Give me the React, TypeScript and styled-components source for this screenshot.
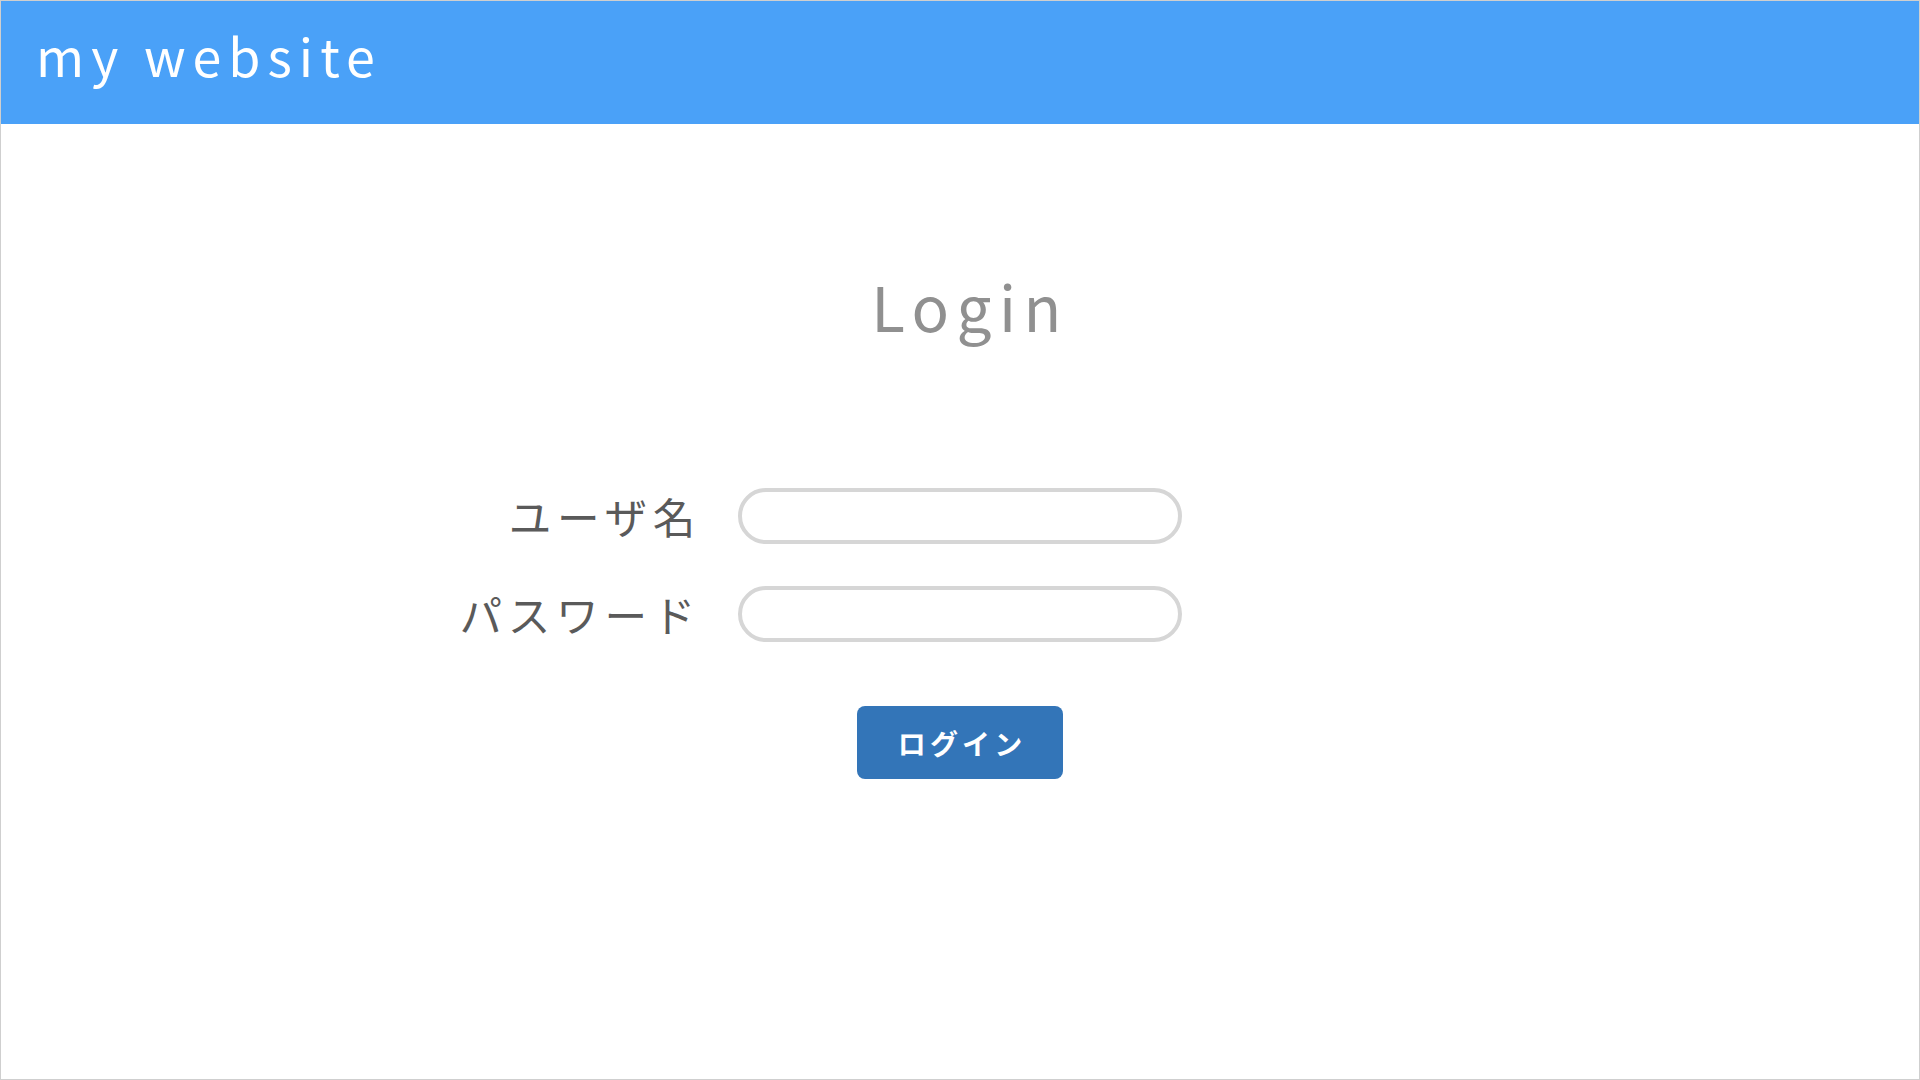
import React from 'react';
import styled, { createGlobalStyle } from 'styled-components';

const GlobalStyle = createGlobalStyle`
	html, body {
		margin: 0;
		padding: 0;
		background: #ffffff;
	}
	* {
		box-sizing: border-box;
	}
	body {
		font-family: "Noto Sans CJK JP", "Noto Sans", sans-serif;
	}
`;

const Page = styled.div`
	width: 1920px;
	height: 1080px;
	border: 1px solid #cfcfcf;
	display: flex;
	flex-direction: column;
	background: #ffffff;
`;

const Header = styled.header`
	height: 123px;
	background: #4aa1f8;
	display: flex;
	align-items: center;
	padding: 0 0 15px 35px;
`;

const SiteName = styled.h1`
	margin: 0;
	color: #ffffff;
	font-size: 52px;
	font-weight: 400;
	letter-spacing: 0.135em;
	line-height: 1;
`;

const Main = styled.main`
	display: flex;
	flex-direction: column;
	align-items: center;
	padding-top: 150px;
`;

const Title = styled.h2`
	margin: 0 0 152px;
	padding-left: 20px;
	color: #909090;
	font-size: 62px;
	font-weight: 400;
	letter-spacing: 0.12em;
	line-height: 1;
`;

const Form = styled.form`
	width: 100%;
	display: grid;
	grid-template-columns: 1fr 444px 1fr;
	row-gap: 42px;
	align-items: center;
`;

const Label = styled.label`
	grid-column: 1;
	justify-self: end;
	margin-right: 37px;
	color: #5a5a5a;
	font-size: 42.6px;
	font-weight: 400;
	letter-spacing: 5.7px;
	line-height: 1;
`;

const Field = styled.input`
	grid-column: 2;
	width: 444px;
	height: 56px;
	border: 4px solid #d6d6d6;
	border-radius: 28px;
	background: #ffffff;
	outline: none;
	padding: 0 20px;
	font-size: 24px;
	font-family: inherit;
`;

const ButtonRow = styled.div`
	grid-column: 1 / 4;
	display: flex;
	justify-content: center;
	margin-top: 22px;
`;

const SubmitButton = styled.button`
	width: 206px;
	height: 73px;
	border: none;
	border-radius: 8px;
	background: #3375b8;
	color: #ffffff;
	font-family: inherit;
	font-size: 28px;
	font-weight: 700;
	letter-spacing: 0.15em;
	padding: 0 0 0 0.15em;
	cursor: pointer;
`;

export default function App() {
	return (
		<>
			<GlobalStyle />
			<Page>
				<Header>
					<SiteName>my website</SiteName>
				</Header>
				<Main>
					<Title>Login</Title>
					<Form onSubmit={(e) => e.preventDefault()}>
						<Label htmlFor="username">ユーザ名</Label>
						<Field id="username" type="text" />
						<Label htmlFor="password">パスワード</Label>
						<Field id="password" type="password" />
						<ButtonRow>
							<SubmitButton type="submit">ログイン</SubmitButton>
						</ButtonRow>
					</Form>
				</Main>
			</Page>
		</>
	);
}
